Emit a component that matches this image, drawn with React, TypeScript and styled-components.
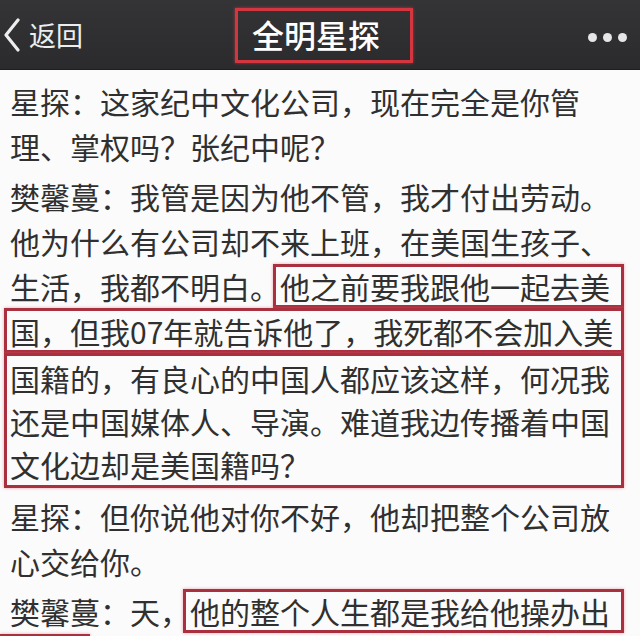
import React from "react";
import styled, { createGlobalStyle } from "styled-components";

const GlobalStyle = createGlobalStyle`
  html, body { margin: 0; padding: 0; background: #fbfbfb; overflow: hidden; }
  body { font-family: "Noto Sans CJK SC", "Noto Sans", sans-serif; }
`;

const Page = styled.div`
  width: 640px;
  height: 636px;
  overflow: hidden;
  background: #fbfbfb;
`;

const Header = styled.header`
  height: 70px;
  background: linear-gradient(#343436, #2b2b2d);
  border-bottom: 1px solid #1e1e1f;
  box-sizing: border-box;
  display: grid;
  grid-template-columns: 1fr auto 1fr;
  align-items: center;
  color: #ececec;
`;

const Back = styled.div`
  display: flex;
  align-items: center;
  gap: 8px;
  padding-left: 3px;
  font-size: 27px;
  color: #ededed;
`;

const TitleBox = styled.div`
  height: 55px;
  box-sizing: border-box;
  border: 3px solid #d4363f;
  box-shadow: 0 0 3px rgba(230, 70, 80, 0.6);
  display: flex;
  align-items: center;
  padding: 0 30px 2px 14px;
  margin-left: 8px;
  margin-top: 1px;
  font-size: 32px;
  font-weight: 500;
  color: #ffffff;
`;

const Dots = styled.div`
  justify-self: end;
  display: flex;
  gap: 6px;
  padding-right: 13px;
  padding-top: 6px;
`;

const Dot = styled.span`
  width: 9px;
  height: 9px;
  border-radius: 50%;
  background: #e6e6e6;
`;

const Content = styled.main`
  padding: 8px 16px 0 10px;
  display: flex;
  flex-direction: column;
  gap: 5px;
  color: #303030;
  font-size: 30px;
  font-weight: 400;
`;

const Para = styled.div`
  display: flex;
  flex-direction: column;
`;

const Line = styled.div<{ $h?: number }>`
  height: ${(p) => p.$h ?? 45}px;
  display: flex;
  align-items: center;
  white-space: nowrap;
`;

const Mark = styled.span`
  flex: 1;
  height: 44px;
  box-sizing: border-box;
  display: flex;
  align-items: center;
  margin-left: -7px;
  padding-left: 4px;
  border: 3px solid #a9303f;
  box-shadow: 0 0 3px rgba(220, 90, 110, 0.55);
`;

const FullMark = styled.div`
  margin-left: -6px;
  padding-left: 3px;
  border: 3px solid #a9303f;
  box-shadow: 0 0 3px rgba(220, 90, 110, 0.55);
  display: flex;
  flex-direction: column;
`;

const Tail = styled.div`
  width: 90px;
  height: 45px;
  box-sizing: border-box;
  margin-left: -10px;
  margin-top: 1px;
  border: 3px solid #a9303f;
  box-shadow: 0 0 3px rgba(220, 90, 110, 0.55);
`;

const Chevron = () => (
  <svg width="18" height="34" viewBox="0 0 18 34" fill="none">
    <path d="M15 2 L3 17 L15 32" stroke="#ededed" strokeWidth="3.2" strokeLinecap="round" strokeLinejoin="round" />
  </svg>
);

export default function App() {
  return (
    <Page>
      <GlobalStyle />
      <Header>
        <Back>
          <Chevron />
          <span>返回</span>
        </Back>
        <TitleBox>全明星探</TitleBox>
        <Dots>
          <Dot />
          <Dot />
          <Dot />
        </Dots>
      </Header>
      <Content>
        <Para>
          <Line>星探：这家纪中文化公司，现在完全是你管</Line>
          <Line>理、掌权吗？张纪中呢？</Line>
        </Para>
        <Para>
          <Line>樊馨蔓：我管是因为他不管，我才付出劳动。</Line>
          <Line>他为什么有公司却不来上班，在美国生孩子、</Line>
          <Line>
            生活，我都不明白。<Mark>他之前要我跟他一起去美</Mark>
          </Line>
          <FullMark>
            <Line $h={39}>国，但我07年就告诉他了，我死都不会加入美</Line>
          </FullMark>
          <FullMark>
            <Line $h={43}>国籍的，有良心的中国人都应该这样，何况我</Line>
            <Line $h={43}>还是中国媒体人、导演。难道我边传播着中国</Line>
            <Line $h={43}>文化边却是美国籍吗？</Line>
          </FullMark>
        </Para>
        <Para>
          <Line>星探：但你说他对你不好，他却把整个公司放</Line>
          <Line>心交给你。</Line>
        </Para>
        <Para>
          <Line>
            樊馨蔓：天，<Mark>他的整个人生都是我给他操办出</Mark>
          </Line>
          <Tail />
        </Para>
      </Content>
    </Page>
  );
}
